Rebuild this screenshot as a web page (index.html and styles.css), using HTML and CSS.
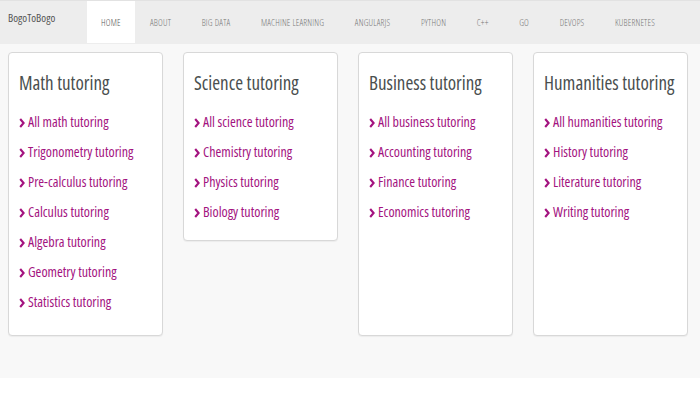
FILE: index.html
```html
<!DOCTYPE html>
<html>
<head>
<meta charset="utf-8">
<link rel="stylesheet" href="styles.css">
</head>
<body>
<nav class="navbar">
  <a class="brand">BogoToBogo</a>
  <ul class="nav">
    <li class="active"><a>HOME</a></li>
    <li><a>ABOUT</a></li>
    <li><a>BIG DATA</a></li>
    <li><a>MACHINE LEARNING</a></li>
    <li><a>ANGULARJS</a></li>
    <li><a>PYTHON</a></li>
    <li><a>C++</a></li>
    <li><a>GO</a></li>
    <li><a>DEVOPS</a></li>
    <li><a>KUBERNETES</a></li>
  </ul>
</nav>
<main class="content">
  <section class="card">
    <h2>Math tutoring</h2>
    <ul class="links">
      <li><a><svg class="chev" viewBox="0 0 6 10"><path d="M1.2 1 L4.6 5 L1.2 9"/></svg>All math tutoring</a></li>
      <li><a><svg class="chev" viewBox="0 0 6 10"><path d="M1.2 1 L4.6 5 L1.2 9"/></svg>Trigonometry tutoring</a></li>
      <li><a><svg class="chev" viewBox="0 0 6 10"><path d="M1.2 1 L4.6 5 L1.2 9"/></svg>Pre-calculus tutoring</a></li>
      <li><a><svg class="chev" viewBox="0 0 6 10"><path d="M1.2 1 L4.6 5 L1.2 9"/></svg>Calculus tutoring</a></li>
      <li><a><svg class="chev" viewBox="0 0 6 10"><path d="M1.2 1 L4.6 5 L1.2 9"/></svg>Algebra tutoring</a></li>
      <li><a><svg class="chev" viewBox="0 0 6 10"><path d="M1.2 1 L4.6 5 L1.2 9"/></svg>Geometry tutoring</a></li>
      <li><a><svg class="chev" viewBox="0 0 6 10"><path d="M1.2 1 L4.6 5 L1.2 9"/></svg>Statistics tutoring</a></li>
    </ul>
  </section>
  <section class="card card-short">
    <h2>Science tutoring</h2>
    <ul class="links">
      <li><a><svg class="chev" viewBox="0 0 6 10"><path d="M1.2 1 L4.6 5 L1.2 9"/></svg>All science tutoring</a></li>
      <li><a><svg class="chev" viewBox="0 0 6 10"><path d="M1.2 1 L4.6 5 L1.2 9"/></svg>Chemistry tutoring</a></li>
      <li><a><svg class="chev" viewBox="0 0 6 10"><path d="M1.2 1 L4.6 5 L1.2 9"/></svg>Physics tutoring</a></li>
      <li><a><svg class="chev" viewBox="0 0 6 10"><path d="M1.2 1 L4.6 5 L1.2 9"/></svg>Biology tutoring</a></li>
    </ul>
  </section>
  <section class="card">
    <h2>Business tutoring</h2>
    <ul class="links">
      <li><a><svg class="chev" viewBox="0 0 6 10"><path d="M1.2 1 L4.6 5 L1.2 9"/></svg>All business tutoring</a></li>
      <li><a><svg class="chev" viewBox="0 0 6 10"><path d="M1.2 1 L4.6 5 L1.2 9"/></svg>Accounting tutoring</a></li>
      <li><a><svg class="chev" viewBox="0 0 6 10"><path d="M1.2 1 L4.6 5 L1.2 9"/></svg>Finance tutoring</a></li>
      <li><a><svg class="chev" viewBox="0 0 6 10"><path d="M1.2 1 L4.6 5 L1.2 9"/></svg>Economics tutoring</a></li>
    </ul>
  </section>
  <section class="card">
    <h2>Humanities tutoring</h2>
    <ul class="links">
      <li><a><svg class="chev" viewBox="0 0 6 10"><path d="M1.2 1 L4.6 5 L1.2 9"/></svg>All humanities tutoring</a></li>
      <li><a><svg class="chev" viewBox="0 0 6 10"><path d="M1.2 1 L4.6 5 L1.2 9"/></svg>History tutoring</a></li>
      <li><a><svg class="chev" viewBox="0 0 6 10"><path d="M1.2 1 L4.6 5 L1.2 9"/></svg>Literature tutoring</a></li>
      <li><a><svg class="chev" viewBox="0 0 6 10"><path d="M1.2 1 L4.6 5 L1.2 9"/></svg>Writing tutoring</a></li>
    </ul>
  </section>
</main>
</body>
</html>
```

FILE: styles.css
```css
* { box-sizing: border-box; }
html, body { margin: 0; padding: 0; background: #fff; }
body {
  font-family: "Open Sans", "Noto Sans", sans-serif;
  font-stretch: 75%;
  width: 700px;
  height: 400px;
  overflow: hidden;
}
.navbar {
  height: 44px;
  background: #ededed;
  border-top: 1px solid #e2e2e2;
  display: flex;
  align-items: stretch;
}
.brand {
  color: #555;
  font-size: 11px;
  padding: 9px 0 0 8px;
  width: 87px;
}
.nav {
  list-style: none;
  margin: 0;
  padding: 0;
  display: flex;
  align-items: stretch;
}
.nav li {
  display: flex;
  align-items: center;
  padding: 0 15.3px;
  font-size: 9px;
  font-weight: 300;
  color: #777;
  letter-spacing: 0.2px;
}
.nav li.active {
  background: #fff;
  color: #555;
  margin-bottom: 1px;
  padding: 0 14px;
}
.content {
  background: #f8f8f8;
  height: 334px;
  padding: 8px 8px;
  display: flex;
  gap: 20px;
  align-items: flex-start;
}
.card {
  width: 155px;
  height: 284px;
  flex: none;
  background: #fff;
  border: 1px solid #d8d8d8;
  border-radius: 4px;
  padding: 18px 0 0 10px;
  box-shadow: 0 1px 1px rgba(0,0,0,0.05);
}
.card-short { height: 189px; }
.card h2 {
  margin: 0 0 12px 0;
  font-weight: 400;
  font-size: 19px;
  line-height: 24px;
  color: #4a4f4f;
  white-space: nowrap;
}
.links {
  list-style: none;
  margin: 0;
  padding: 0;
}
.links li {
  height: 30px;
  line-height: 30px;
  font-size: 14px;
  color: #a3137f;
  white-space: nowrap;
}
.chev {
  width: 6px;
  height: 10px;
  margin-right: 3px;
  vertical-align: -0.5px;
  fill: none;
  stroke: #a3137f;
  stroke-width: 2.1;
  stroke-linecap: butt;
  stroke-linejoin: miter;
}
```
